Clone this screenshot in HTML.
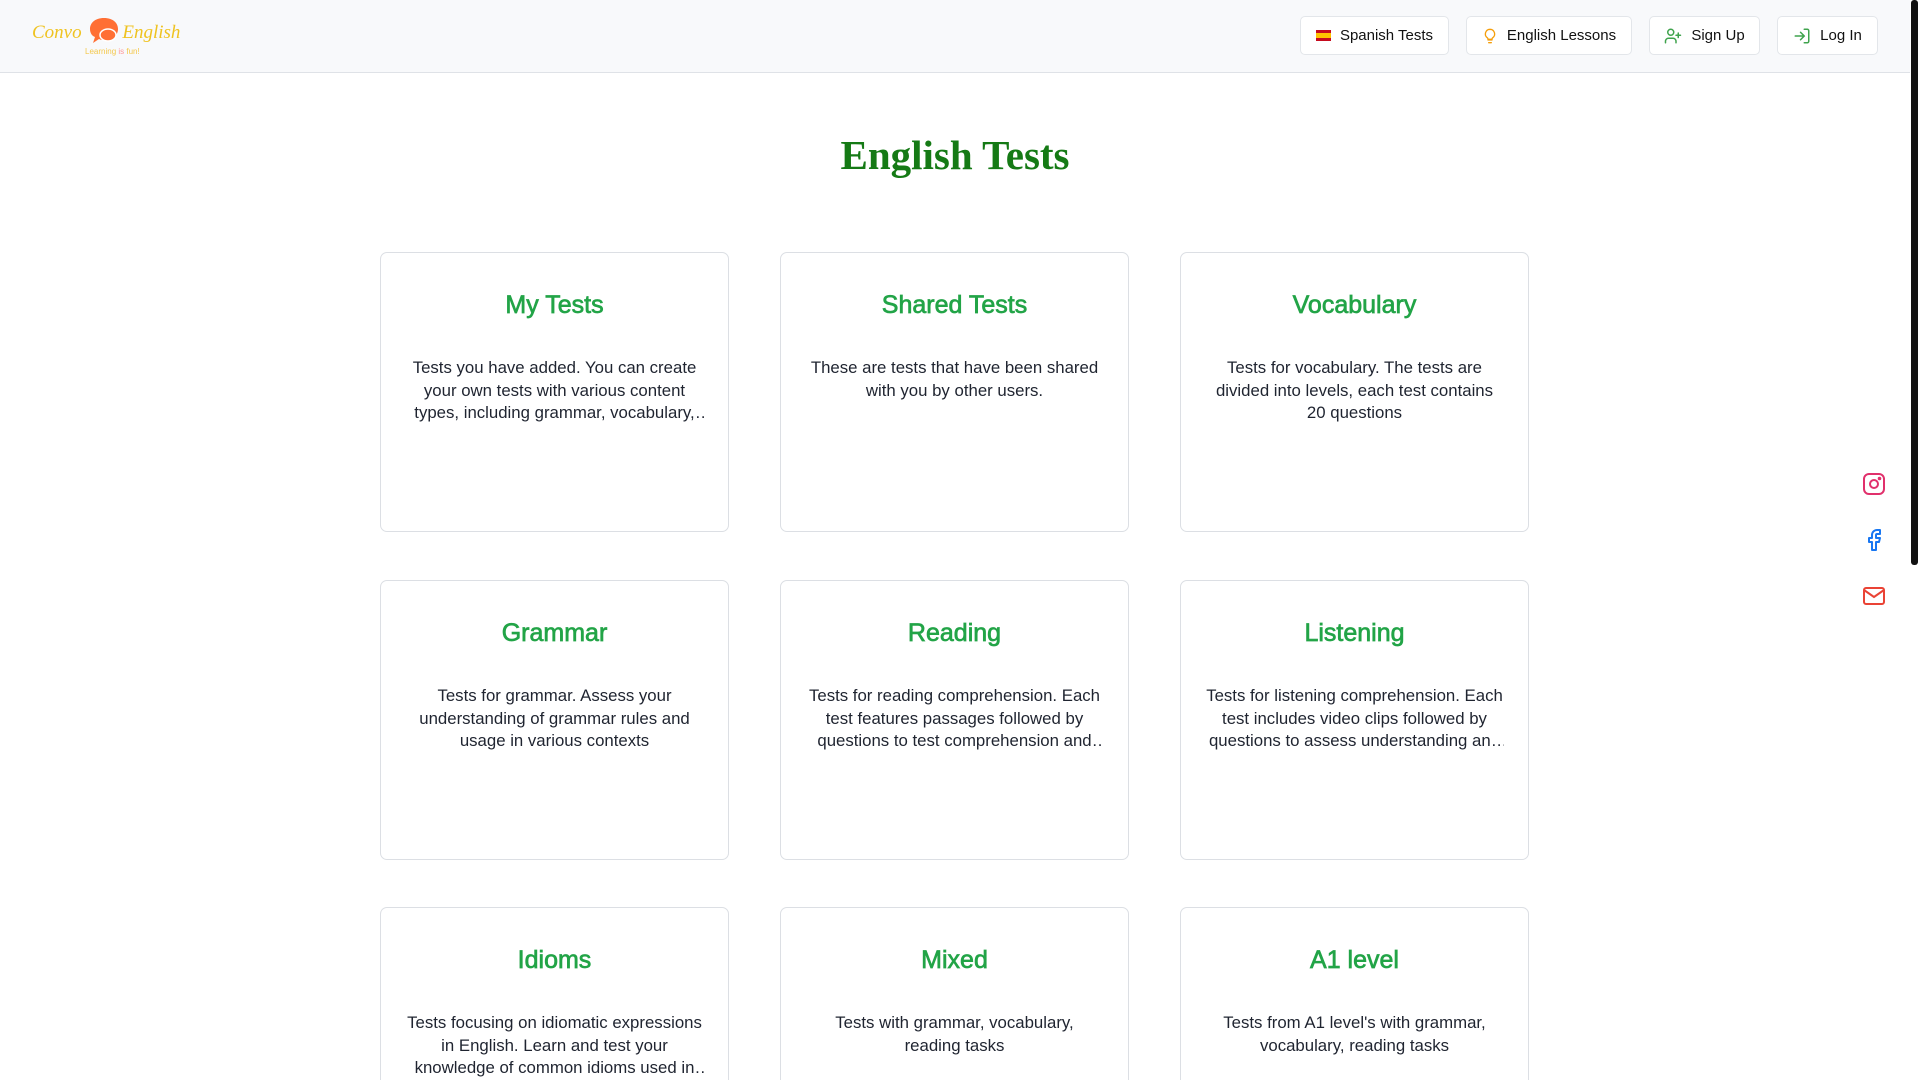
<!DOCTYPE html>
<html><head><meta charset="utf-8">
<style>
*{box-sizing:border-box;margin:0;padding:0}
html,body{width:1920px;height:1080px;overflow:hidden;background:#fff;font-family:"Liberation Sans",sans-serif}
#wrap{position:relative;width:1920px;height:1080px;overflow:hidden}
.hdr{position:absolute;left:0;top:0;width:1910px;height:73px;background:#f8f9fb;border-bottom:1px solid #dfe2e7}
.logo{position:absolute;left:32px;top:16px;font-family:"Liberation Serif",serif;font-style:italic;color:#efc321;font-size:19px;white-space:nowrap}
.btn{position:absolute;top:16px;height:39px;border:1px solid #e3e6ea;border-radius:5px;background:#fff;font-size:15px;color:#111;display:flex;align-items:center;justify-content:center;gap:9px}
h1{position:absolute;left:0;width:1910px;top:131px;text-align:center;font-family:"Liberation Serif",serif;font-weight:bold;color:#157a15;font-size:41px}
.card{position:absolute;width:349px;height:280px;border:1px solid #dcdfe4;border-radius:7px;background:#fff;text-align:center}
.card h2{margin-top:38px;font-size:25px;font-weight:normal;color:#22a447;-webkit-text-stroke:0.7px #22a447;height:32px}
.card p{margin:34px 24px 0;font-size:16.8px;line-height:22.6px;color:#1f2430;display:-webkit-box;-webkit-line-clamp:3;-webkit-box-orient:vertical;overflow:hidden}
.sb{position:absolute;left:1910px;top:0;width:10px;height:1080px;background:#fff}
.sb div{position:absolute;left:1px;top:0;width:7px;height:565px;background:#111;border-radius:3px}
.soc{position:absolute;left:1862px}
</style></head><body><div id="wrap">
<div class="hdr">
 <div class="logo">Convo
  <svg width="34" height="30" viewBox="0 0 34 30" style="vertical-align:-8px;margin:0 1px"><path d="M17 2C8 2 3 7 3 13c0 4 2 7 5 8l-2 6 6-4c2 1 3 1 5 1 9 0 14-5 14-11S26 2 17 2z" fill="#ff6f34"/><ellipse cx="21" cy="19" rx="8" ry="6" fill="#ff6f34" stroke="#fff" stroke-width="1.5"/></svg>English
  <div style="position:absolute;left:53px;top:31px;font-size:8px;font-style:normal;font-family:'Liberation Sans',sans-serif;color:#f4c84b;white-space:nowrap">Learning <span style="color:#f99">is</span> fun!</div>
 </div>
 <div class="btn" style="left:1300px;width:149px"><svg width="15" height="11"><rect width="15" height="11" fill="#c60b1e"/><rect y="3" width="15" height="5" fill="#ffc400"/></svg>Spanish Tests</div>
 <div class="btn" style="left:1466px;width:166px"><svg width="16" height="18" viewBox="0 0 24 24" fill="none" stroke="#f59e0b" stroke-width="2" stroke-linecap="round"><path d="M9 18h6M10 22h4M12 2a7 7 0 0 0-4 12.7c.6.5 1 1.3 1 2.3h6c0-1 .4-1.8 1-2.3A7 7 0 0 0 12 2z"/></svg>English Lessons</div>
 <div class="btn" style="left:1649px;width:111px"><svg width="18" height="18" viewBox="0 0 24 24" fill="none" stroke="#3fa34d" stroke-width="2" stroke-linecap="round"><circle cx="9" cy="7" r="4"/><path d="M2 21v-2a4 4 0 0 1 4-4h6a4 4 0 0 1 4 4v2M19 8v6M22 11h-6"/></svg>Sign Up</div>
 <div class="btn" style="left:1777px;width:101px"><svg width="18" height="18" viewBox="0 0 24 24" fill="none" stroke="#3fa34d" stroke-width="2" stroke-linecap="round"><path d="M15 3h4a2 2 0 0 1 2 2v14a2 2 0 0 1-2 2h-4M10 17l5-5-5-5M15 12H3"/></svg>Log In</div>
</div>
<h1>English Tests</h1>

<div class="card" style="left:380px;top:252px"><h2>My Tests</h2><p>Tests you have added. You can create your own tests with various content types, including grammar, vocabulary, reading and more</p></div>
<div class="card" style="left:780px;top:252px"><h2>Shared Tests</h2><p>These are tests that have been shared with you by other users.</p></div>
<div class="card" style="left:1180px;top:252px"><h2>Vocabulary</h2><p>Tests for vocabulary. The tests are divided into levels, each test contains 20 questions</p></div>
<div class="card" style="left:380px;top:580px"><h2>Grammar</h2><p>Tests for grammar. Assess your understanding of grammar rules and usage in various contexts</p></div>
<div class="card" style="left:780px;top:580px"><h2>Reading</h2><p>Tests for reading comprehension. Each test features passages followed by questions to test comprehension and analysis</p></div>
<div class="card" style="left:1180px;top:580px"><h2>Listening</h2><p>Tests for listening comprehension. Each test includes video clips followed by questions to assess understanding and more</p></div>
<div class="card" style="left:380px;top:907px"><h2>Idioms</h2><p>Tests focusing on idiomatic expressions in English. Learn and test your knowledge of common idioms used in everyday speech</p></div>
<div class="card" style="left:780px;top:907px"><h2>Mixed</h2><p>Tests with grammar, vocabulary, reading tasks</p></div>
<div class="card" style="left:1180px;top:907px"><h2>A1 level</h2><p>Tests from A1 level's with grammar, vocabulary, reading tasks</p></div>

<svg class="soc" style="top:472px" width="24" height="24" viewBox="0 0 24 24" fill="none" stroke="#e1306c" stroke-width="2"><rect x="2" y="2" width="20" height="20" rx="5"/><circle cx="12" cy="12" r="4"/><circle cx="17.5" cy="6.5" r="0.8" fill="#e1306c"/></svg>
<svg class="soc" style="top:528px" width="24" height="24" viewBox="0 0 24 24" fill="none" stroke="#1877f2" stroke-width="2" stroke-linejoin="round"><path d="M18 2h-3a5 5 0 0 0-5 5v3H7v4h3v8h4v-8h3l1-4h-4V7a1 1 0 0 1 1-1h3z"/></svg>
<svg class="soc" style="top:584px" width="24" height="24" viewBox="0 0 24 24" fill="none" stroke="#ea4335" stroke-width="2"><rect x="2" y="4" width="20" height="16" rx="2"/><path d="M2 6l10 7 10-7"/></svg>
<div class="sb"><div></div></div>
</div></body></html>
